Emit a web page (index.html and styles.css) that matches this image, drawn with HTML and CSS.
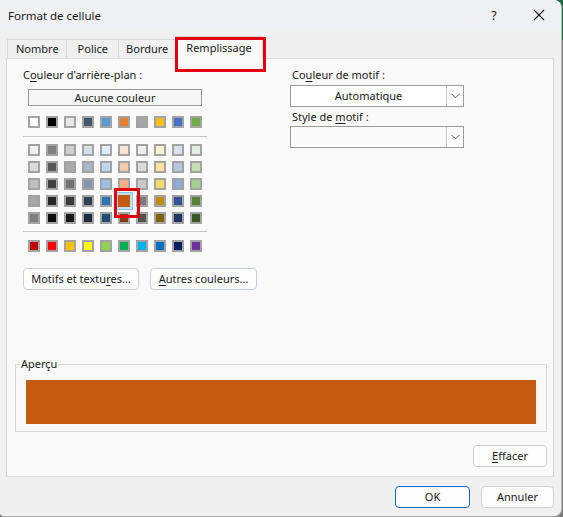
FILE: index.html
```html
<!DOCTYPE html>
<html lang="fr">
<head>
<meta charset="utf-8">
<title>Format de cellule</title>
<link rel="stylesheet" href="styles.css">
</head>
<body>
<div class="window">
  <div class="titlebar">
    <span class="title">Format de cellule</span>
    <span class="tb-help">?</span>
    <span class="tb-close">
      <svg width="12" height="12" viewBox="0 0 12 12"><path d="M1 1 L11 11 M11 1 L1 11" stroke="#1b1b1b" stroke-width="1.1" fill="none"/></svg>
    </span>
  </div>

  <div class="tabs">
    <div class="tab">Nombre</div>
    <div class="tab tab-police">Police</div>
    <div class="tab tab-bordure">Bordure</div>
    <div class="tab active">Remplissage</div>
  </div>

  <div class="panel">
    <div class="cols">
      <div class="col-left">
        <div class="label">C<u>o</u>uleur d'arrière-plan :</div>
        <button class="btn-none">Aucune couleur</button>
        <div class="sw-row first">
          <span class="sw" style="background:#ffffff"></span>
          <span class="sw" style="background:#000000"></span>
          <span class="sw" style="background:#e7e6e6"></span>
          <span class="sw" style="background:#44546a"></span>
          <span class="sw" style="background:#5b9bd5"></span>
          <span class="sw" style="background:#ed7d31"></span>
          <span class="sw" style="background:#a5a5a5"></span>
          <span class="sw" style="background:#ffc000"></span>
          <span class="sw" style="background:#4472c4"></span>
          <span class="sw" style="background:#70ad47"></span>
        </div>
        <div class="sep"></div>
        <div class="sw-grid">
          <div class="sw-row">
            <span class="sw" style="background:#f2f2f2"></span>
            <span class="sw" style="background:#7f7f7f"></span>
            <span class="sw" style="background:#d0cece"></span>
            <span class="sw" style="background:#d6dce5"></span>
            <span class="sw" style="background:#ddebf7"></span>
            <span class="sw" style="background:#fce4d6"></span>
            <span class="sw" style="background:#ededed"></span>
            <span class="sw" style="background:#fff2cc"></span>
            <span class="sw" style="background:#d9e1f2"></span>
            <span class="sw" style="background:#e2efda"></span>
          </div>
          <div class="sw-row">
            <span class="sw" style="background:#d9d9d9"></span>
            <span class="sw" style="background:#595959"></span>
            <span class="sw" style="background:#aeaaaa"></span>
            <span class="sw" style="background:#acb9ca"></span>
            <span class="sw" style="background:#bdd7ee"></span>
            <span class="sw" style="background:#f8cbad"></span>
            <span class="sw" style="background:#dbdbdb"></span>
            <span class="sw" style="background:#ffe699"></span>
            <span class="sw" style="background:#b4c6e7"></span>
            <span class="sw" style="background:#c6e0b4"></span>
          </div>
          <div class="sw-row">
            <span class="sw" style="background:#bfbfbf"></span>
            <span class="sw" style="background:#404040"></span>
            <span class="sw" style="background:#757171"></span>
            <span class="sw" style="background:#8497b0"></span>
            <span class="sw" style="background:#9bc2e6"></span>
            <span class="sw" style="background:#f4b084"></span>
            <span class="sw" style="background:#c9c9c9"></span>
            <span class="sw" style="background:#ffd966"></span>
            <span class="sw" style="background:#8ea9db"></span>
            <span class="sw" style="background:#a9d08e"></span>
          </div>
          <div class="sw-row">
            <span class="sw" style="background:#a6a6a6"></span>
            <span class="sw" style="background:#262626"></span>
            <span class="sw" style="background:#3a3838"></span>
            <span class="sw" style="background:#333f4f"></span>
            <span class="sw" style="background:#2f75b5"></span>
            <span class="sw sel" style="background:#c65911"></span>
            <span class="sw" style="background:#7b7b7b"></span>
            <span class="sw" style="background:#bf8f00"></span>
            <span class="sw" style="background:#305496"></span>
            <span class="sw" style="background:#548235"></span>
          </div>
          <div class="sw-row">
            <span class="sw" style="background:#808080"></span>
            <span class="sw" style="background:#0d0d0d"></span>
            <span class="sw" style="background:#161616"></span>
            <span class="sw" style="background:#222b35"></span>
            <span class="sw" style="background:#1f4e78"></span>
            <span class="sw" style="background:#833c0c"></span>
            <span class="sw" style="background:#525252"></span>
            <span class="sw" style="background:#806000"></span>
            <span class="sw" style="background:#203764"></span>
            <span class="sw" style="background:#375623"></span>
          </div>
        </div>
        <div class="sep sep2"></div>
        <div class="sw-row std">
          <span class="sw" style="background:#c00000"></span>
          <span class="sw" style="background:#ff0000"></span>
          <span class="sw" style="background:#ffc000"></span>
          <span class="sw" style="background:#ffff00"></span>
          <span class="sw" style="background:#92d050"></span>
          <span class="sw" style="background:#00b050"></span>
          <span class="sw" style="background:#00b0f0"></span>
          <span class="sw" style="background:#0070c0"></span>
          <span class="sw" style="background:#002060"></span>
          <span class="sw" style="background:#7030a0"></span>
        </div>
      </div>

      <div class="col-right">
        <div class="label">Co<u>u</u>leur de motif :</div>
        <div class="combo">
          <span class="combo-text">Automatique</span>
          <span class="combo-btn"><svg width="9" height="6" viewBox="0 0 9 6"><path d="M0.5 0.8 L4.5 4.8 L8.5 0.8" stroke="#606060" stroke-width="1" fill="none"/></svg></span>
        </div>
        <div class="label label2">Style de <u>m</u>otif :</div>
        <div class="combo combo2">
          <span class="combo-text"></span>
          <span class="combo-btn"><svg width="9" height="6" viewBox="0 0 9 6"><path d="M0.5 0.8 L4.5 4.8 L8.5 0.8" stroke="#606060" stroke-width="1" fill="none"/></svg></span>
        </div>
      </div>
    </div>

    <div class="btn-row">
      <button class="btn btn-motifs">Motifs et textu<u>r</u>es...</button>
      <button class="btn btn-autres"><u>A</u>utres couleurs...</button>
    </div>

    <fieldset class="preview">
      <legend>Aperçu</legend>
      <div class="preview-fill"></div>
    </fieldset>

    <div class="effacer-row">
      <button class="btn btn-effacer"><u>E</u>ffacer</button>
    </div>
  </div>

  <div class="footer">
    <button class="btn btn-ok">OK</button>
    <button class="btn btn-cancel">Annuler</button>
  </div>
</div>
</body>
</html>
```

FILE: styles.css
```css
* { box-sizing: border-box; }

html, body {
  margin: 0;
  padding: 0;
}

body {
  width: 563px;
  height: 517px;
  overflow: hidden;
  background: linear-gradient(#1f6e43 0, #1f6e43 40px, #7a7a7a 40px);
  font-family: "Noto Sans", "Liberation Sans", sans-serif;
  font-size: 11px;
  color: #1a1a1a;
}

.window {
  width: 562px;
  height: 517px;
  background: #f0f0f0;
  border-right: 1px solid #b9b9b9;
  border-bottom: 1px solid #a9a9a9;
  border-radius: 0 8px 8px 4px;
  overflow: hidden;
  display: flex;
  flex-direction: column;
}

/* Title bar */
.titlebar {
  height: 30px;
  flex: none;
  display: flex;
  align-items: center;
  background: #eff1f4;
  padding-left: 8px;
}

.title {
  font-size: 11.5px;
  color: #1a1a1a;
  flex: 1;
}

.tb-help {
  font-size: 12.5px;
  width: 12px;
  text-align: center;
  margin-right: 33px;
  color: #1a1a1a;
}

.tb-close {
  width: 12px;
  height: 12px;
  margin-right: 16px;
  display: flex;
}

/* Tabs */
.tabs {
  display: flex;
  align-items: flex-end;
  height: 28px;
  padding-left: 7px;
  flex: none;
  position: relative;
  z-index: 2;
}

.tab {
  height: 19px;
  line-height: 18px;
  padding: 0 7px 0 8px;
  border: 1px solid #dadada;
  border-bottom: none;
  border-right: none;
  background: #f0f0f0;
  color: #1a1a1a;
  font-size: 11px;
}

.tab.tab-police { padding: 0 10px 0 11px; }
.tab.tab-bordure { padding: 0 7px 0 7px; }

.tab.active {
  height: 23px;
  line-height: 21px;
  padding: 0 10px;
  border-right: 1px solid #dadada;
  background: #f9f9f9;
  margin-bottom: -1px;
  position: relative;
}

.tab.active::after {
  content: "";
  position: absolute;
  left: -1px;
  right: -4px;
  top: 0;
  height: 29px;
  border: 3px solid #e3000f;
}

/* Panel */
.panel {
  margin-left: 6px;
  width: 548px;
  height: 419px;
  flex: none;
  background: #f9f9f9;
  border: 1px solid #dadada;
  padding: 8px 6px 9px 8px;
  display: flex;
  flex-direction: column;
  position: relative;
  z-index: 1;
}

.cols {
  display: flex;
  margin-left: 8px;
}

.col-left {
  width: 184px;
}

.col-right {
  width: 174px;
  margin-left: 83px;
}

.label {
  height: 16px;
  line-height: 16px;
  font-size: 11px;
  white-space: nowrap;
}

.col-right .label {
  padding-left: 2px;
}

u {
  text-decoration-thickness: 1px;
  text-underline-offset: 2px;
}

button {
  font-family: inherit;
  color: #1a1a1a;
  padding: 0;
  margin: 0;
}

.btn-none {
  display: block;
  margin: 6px 0 0 5px;
  width: 174px;
  height: 17px;
  border: 1px solid #999999;
  background: #f7f7f7;
  font-size: 11px;
  line-height: 14px;
}

.sw-row {
  display: flex;
  gap: 6px;
  margin-left: 5px;
  height: 12px;
}

.sw-row.first {
  margin-top: 10px;
}

.sw {
  width: 12px;
  height: 12px;
  border: 2px solid #a3a3a3;
  display: block;
  position: relative;
}

.sw.sel {
  z-index: 3;
  border-color: #c65911;
  box-shadow: 0 0 0 2px #bfe0f8, 0 0 0 3px #8cc4ee;
}

.sw.sel::after {
  content: "";
  position: absolute;
  left: -6px;
  top: -9px;
  width: 20px;
  height: 24px;
  border: 3px solid #e3000f;
}

.sep {
  height: 1px;
  background: #c9c9c9;
  margin-top: 8px;
}

.sw-grid {
  display: flex;
  flex-direction: column;
  gap: 5px;
  margin-top: 7px;
}

.sep2 {
  margin-top: 7px;
}

.sw-row.std {
  margin-top: 8px;
}

/* Combos */
.combo {
  margin-top: 2px;
  width: 174px;
  height: 22px;
  border: 1px solid #9c9c9c;
  background: #ffffff;
  display: flex;
  align-items: stretch;
}

.combo2 {
  margin-top: 1px;
  background: #fbfbfb;
}

.label2 {
  margin-top: 2px;
}

.combo-text {
  flex: 1;
  text-align: center;
  font-size: 11px;
  line-height: 20px;
}

.combo-btn {
  width: 17px;
  border-left: 1px solid #c4c4c4;
  display: flex;
  align-items: center;
  justify-content: center;
  background: #ffffff;
}

/* Buttons */
.btn-row {
  display: flex;
  gap: 11px;
  margin: 16px 0 0 8px;
}

.btn {
  height: 22px;
  border: 1px solid #d0d0d0;
  border-radius: 4px;
  background: #fdfdfd;
  font-size: 11px;
  line-height: 18px;
  text-align: center;
}

.btn-motifs { width: 116px; }
.btn-autres { width: 107px; border-color: #c8ced6; }

/* Preview */
.preview {
  margin: auto 0 0 0;
  width: 532px;
  padding: 8px 10px 7px 10px;
  border: 1px solid #d8d8d8;
  min-width: 0;
}

.preview legend {
  padding: 0 1px;
  margin-left: -6px;
  font-size: 11px;
  line-height: 16px;
}

.preview-fill {
  height: 44px;
  background: #c55a11;
}

.effacer-row {
  display: flex;
  justify-content: flex-end;
  margin-top: 13px;
  width: 532px;
}

.btn-effacer { width: 74px; }

/* Footer */
.footer {
  display: flex;
  justify-content: flex-end;
  gap: 11px;
  margin-top: 9px;
  padding-right: 7px;
}

.btn-ok {
  width: 75px;
  border-color: #0f67be;
}

.btn-cancel { width: 73px; }
```
